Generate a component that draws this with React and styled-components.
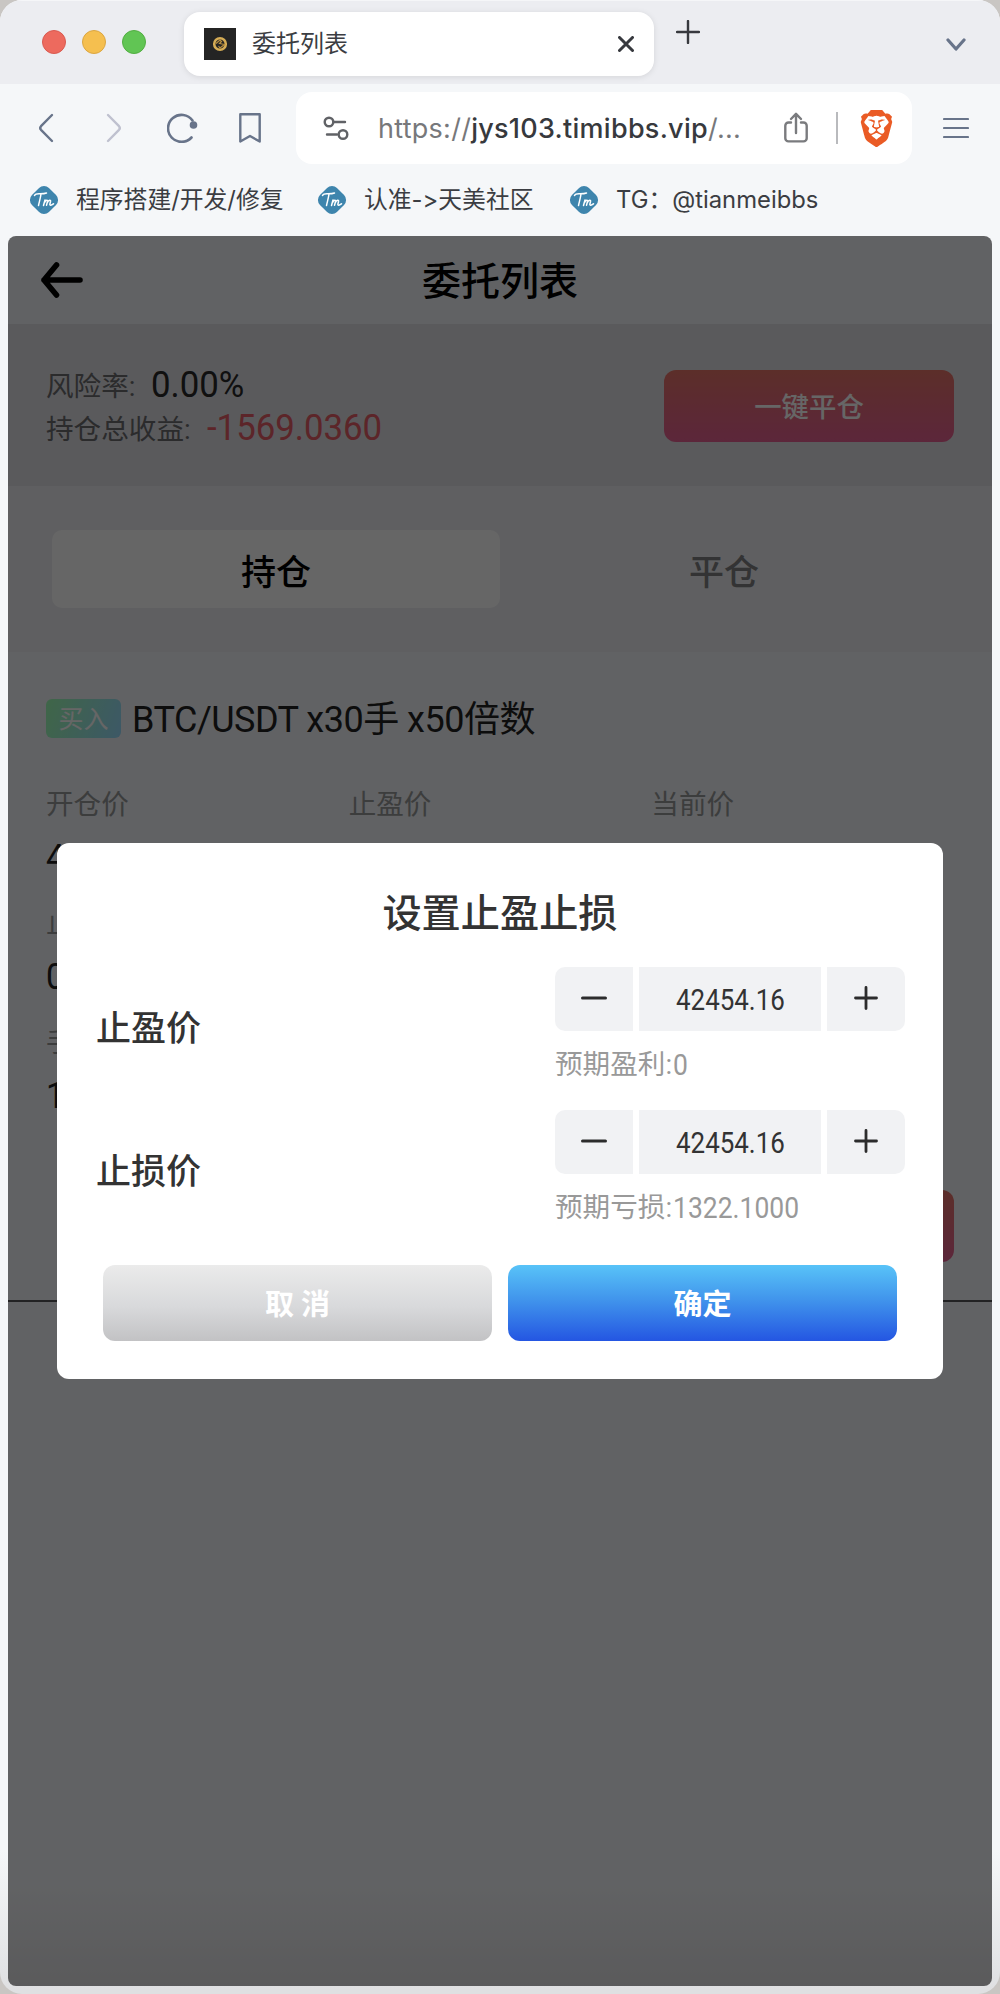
import * as React from "react"
import styled, { createGlobalStyle, css } from "styled-components"
import { SiBrave } from "react-icons/si"

const GlobalStyle = createGlobalStyle`
  * {
    box-sizing: border-box;
  }
  body {
    margin: 0;
    background: #c9c6c3;
  }
  button {
    border: 0;
    padding: 0;
    background: none;
    font: inherit;
    color: inherit;
  }
`

const Window = styled.div`
  width: 1000px;
  height: 1994px;
  border-radius: 22px;
  overflow: hidden;
  display: flex;
  flex-direction: column;
  background: linear-gradient(#f5f7f9 1850px, #dfe0e2 1990px);
  font-family: Inter, "Noto Sans CJK SC", sans-serif;
  font-feature-settings: "calt" 0;
  color: #3b3d42;
`

const TabStrip = styled.div`
  height: 84px;
  flex: none;
  display: flex;
  align-items: flex-start;
  padding: 11px 34px 0 42px;
  background: #ecedf1;
  border-top: 1px solid #f5f6f8;
`

const Lights = styled.div`
  display: flex;
  gap: 16px;
  margin: 18px 38px 0 0;
`

const Light = styled.span`
  width: 24px;
  height: 24px;
  border-radius: 50%;
  background: ${p => p.$color};
  border: 1px solid ${p => p.$edge};
`

const Tab = styled.div`
  width: 470px;
  height: 64px;
  display: flex;
  align-items: center;
  padding: 0 20px;
  border-radius: 16px;
  background: #fff;
  box-shadow: 0 1px 6px rgba(0, 0, 0, 0.1);
  font-size: 24px;
  line-height: 32px;

  & > span {
    flex: 1;
    margin-left: 16px;
  }
`

const NewTab = styled.button`
  margin: 8px auto 0 22px;
  display: flex;
`

const TabMenu = styled.button`
  margin-top: 25px;
  display: flex;
`

const Toolbar = styled.div`
  height: 80px;
  flex: none;
  display: flex;
  align-items: center;
  padding: 8px 31px 0 36px;
`

const NavIcons = styled.div`
  display: grid;
  grid-template-columns: 69px 62px 72px 1fr;
  align-items: center;
  width: 260px;
`

const Address = styled.div`
  width: 616px;
  height: 72px;
  display: flex;
  align-items: center;
  padding: 0 17px 0 27px;
  border-radius: 16px;
  background: #fff;
  margin-right: auto;
`

const Url = styled.div`
  flex: 1;
  margin-left: 29px;
  padding-top: 1px;
  font-size: 27px;
  line-height: 36px;
  letter-spacing: 0.27px;
  color: #77787b;
  white-space: nowrap;

  & > b {
    font-weight: 450;
    color: #37393d;
  }
`

const Separator = styled.span`
  width: 2px;
  height: 32px;
  margin: 0 20px 0 28px;
  background: #b9babd;
`

const Bookmarks = styled.div`
  height: 72px;
  flex: none;
  display: flex;
  align-items: center;
  padding-left: 29px;
  font-size: 23.8px;
  line-height: 32px;
`

const Bookmark = styled.div`
  width: ${p => p.$width}px;
  display: flex;
  align-items: center;
  gap: 17px;
  white-space: nowrap;
`

const Page = styled.div`
  position: relative;
  width: 984px;
  height: 1750px;
  margin: 0 8px;
  border-radius: 8px;
  overflow: hidden;
  background: linear-gradient(#f3f5f9 1650px, #e2e2e5 1750px);
  font-family: Roboto, "Noto Sans CJK SC", sans-serif;
`

const Header = styled.header`
  height: 88px;
  display: grid;
  grid-template-columns: 1fr auto 1fr;
  align-items: center;
  padding: 0 33px;
  color: #000;

  & > h1 {
    margin: 0;
    padding-top: 4px;
    font-size: 39px;
    font-weight: 500;
    line-height: 56px;
  }
`

const Stats = styled.section`
  height: 162px;
  display: flex;
  align-items: center;
  justify-content: space-between;
  padding: 2px 38px 0;
  background: #e1e1e5;
`

const StatLine = styled.div`
  display: flex;
  align-items: center;
  height: 43px;
  font-size: 37px;
`

const StatLabel = styled.span`
  margin-top: -2px;
  font-size: 27.6px;
  color: #6b6b6f;
`

const Num = styled.span`
  display: inline-block;
  transform: scaleX(${p => p.$stretch || 0.9});
  transform-origin: ${p => (p.$center ? "center" : "left")};
  white-space: nowrap;
`

const StatValue = styled(Num)`
  margin-left: 16px;
  color: ${p => p.$color};
`

const DangerButton = styled.button`
  width: 290px;
  height: 72px;
  padding-bottom: 2px;
  border-radius: 12px;
  background: linear-gradient(#e67468, #e66093);
  font-size: 27.4px;
  font-weight: 500;
  color: #fff;
`

const Tabs = styled.nav`
  height: 166px;
  display: flex;
  padding: 44px 44px 0;
  background: #edeef2;
`

const TabItem = styled.button`
  width: 448px;
  height: 78px;
  border-radius: 10px;
  font-size: 35px;
  font-weight: 500;
  color: ${p => (p.$active ? "#000" : "#808083")};
  background: ${p => (p.$active ? "#fff" : "none")};
`

const Order = styled.section`
  height: 650px;
  padding: 42px 38px 0;
  border-bottom: 2px solid #555558;
`

const OrderTitle = styled.div`
  display: flex;
  align-items: center;
  height: 48px;
  gap: 11px;
  font-size: 36px;
  line-height: 44px;
  letter-spacing: -0.5px;
  color: #222;

  & > :last-child {
    padding-top: 4px;
  }
`

const Side = styled.span`
  width: 75px;
  height: 39px;
  border-radius: 6px;
  background: linear-gradient(110deg, #9fffb4, #98dcff);
  font-size: 25px;
  line-height: 41px;
  letter-spacing: 0;
  text-align: center;
  color: #fff;
`

const Grid = styled.div`
  display: grid;
  grid-template-columns: repeat(3, 1fr);
  grid-auto-rows: 119px;
  margin-top: 42px;
`

const Cell = styled.div`
  grid-column: ${p => p.$col};
  font-size: 27.6px;
  line-height: 42px;
  color: #97999a;

  & > ${Num} {
    display: block;
    margin-top: 11px;
    font-size: 37px;
    color: #222;
  }
`

const OrderActions = styled.div`
  display: flex;
  justify-content: flex-end;
  margin-top: 49px;
`

const Overlay = styled.div`
  position: absolute;
  inset: 0;
  display: flex;
  align-items: center;
  justify-content: center;
  background: rgba(0, 0, 0, 0.6);
`

const Dialog = styled.div`
  width: 886px;
  height: 536px;
  padding: 41px 38px 0;
  border-radius: 12px;
  background: #fff;
  color: #333;

  & > h2 {
    margin: 0 0 23px;
    font-size: 39.2px;
    font-weight: 500;
    line-height: 60px;
    text-align: center;
  }
`

const PriceRow = styled.div`
  height: 143px;
  display: flex;
  justify-content: space-between;

  & > label {
    padding: 37px 0 0 1px;
    font-size: 35px;
    line-height: 52px;
    font-weight: 500;
  }
`

const StepperBox = styled.div`
  width: 350px;
`

const Stepper = styled.div`
  display: grid;
  grid-template-columns: 78px 182px 78px;
  gap: 6px;
  height: 64px;

  & > * {
    display: flex;
    align-items: center;
    justify-content: center;
    background: #f1f2f4;
  }
  & > :first-child {
    border-radius: 10px 0 0 10px;
  }
  & > :last-child {
    border-radius: 0 10px 10px 0;
  }
`

const StepValue = styled.div`
  font-size: 28.8px;
  padding-top: 2px;
`

const Hint = styled.div`
  display: flex;
  margin-top: 14px;
  font-size: 27.6px;
  line-height: 40px;
  color: #999;

  & > ${Num} {
    margin-left: 1px;
    font-size: 28.8px;
  }
`

const Buttons = styled.div`
  display: flex;
  justify-content: center;
  gap: 16px;
  margin-top: 12px;
`

const DialogButton = styled.button`
  width: 389px;
  height: 76px;
  padding-bottom: 2px;
  border-radius: 12px;
  font-size: 29px;
  font-weight: 700;
  color: #fff;
  ${p =>
    p.$primary
      ? css`
          background: linear-gradient(#58c3f8, #4195ec 45%, #2456e2);
        `
      : css`
          background: linear-gradient(#ebebeb, #d8d9db 55%, #c2c2c4);
        `}
`

const Favicon = () => (
  <svg width="32" height="32" viewBox="0 0 32 32">
    <rect width="32" height="32" fill="#242424" />
    <circle cx="16" cy="16" r="5.8" fill="none" stroke="#d5ac55" strokeWidth="2.6" />
    <path d="M12 15.5l4-3.500 1.500 1.500-2 2 5 1-4.500 3.500-1.500-2" fill="none" stroke="#b98f3f" strokeWidth="1.2" />
  </svg>
)

const TmIcon = () => (
  <svg width="30" height="30" viewBox="0 0 30 30">
    <rect x="3" y="3" width="24" height="24" rx="7" fill="#3e85ad" transform="rotate(45 15 15)" />
    <path
      d="M5.500 10.500c1-2 3-1.800 5.500-1.700 2.500 0 4.500 0 6.500-.8M12 9c-.5 4-1.500 7-2.500 11.500M14.500 20.500l1.500-5.500M15.500 17.500c1.500-2.500 3.500-3 3-.8l-1 3.500M18.300 17.500c1.500-2.500 3.700-3 3.200-.8-.6 2-1.200 3.800.3 3.500 1 0 1.700-.6 2.700-1.400"
      fill="none"
      stroke="#fff"
      strokeWidth="1.5"
      strokeLinecap="round"
      strokeLinejoin="round"
    />
  </svg>
)

const Line = ({ w, h, d, color = "#68748a", stroke = 2.4, children }) => (
  <svg
    width={w}
    height={h}
    viewBox={`0 0 ${w} ${h}`}
    fill="none"
    stroke={color}
    strokeWidth={stroke}
    strokeLinecap="round"
    strokeLinejoin="round"
  >
    <path d={d} />
    {children}
  </svg>
)

const bookmarks = [
  { text: "程序搭建/开发/修复", width: 288 },
  { text: "认准->天美社区", width: 252 },
  { text: "TG：@tianmeibbs", width: 300 },
]

const cells = [
  { name: "开仓价", col: 1, value: "42" },
  { name: "止盈价", col: 2 },
  { name: "当前价", col: 3 },
  { name: "止损价", col: 1, value: "0" },
  { name: "手续费", col: 1, value: "1" },
]

const rows = [
  { label: "止盈价", hint: "预期盈利:", amount: "0" },
  { label: "止损价", hint: "预期亏损:", amount: "1322.1000" },
]

const Browser = () => (
  <>
    <TabStrip>
      <Lights>
        <Light $color="#ed6a5e" $edge="#d95a50" />
        <Light $color="#f5bf4f" $edge="#dba642" />
        <Light $color="#61c554" $edge="#52ae42" />
      </Lights>
      <Tab>
        <Favicon />
        <span>委托列表</span>
        <Line w={16} h={16} d="M1.500 1.500l13 13M14.500 1.500l-13 13" color="#37393e" stroke={3} />
      </Tab>
      <NewTab>
        <Line w={24} h={24} d="M12 1v22M1 12h22" color="#37393e" stroke={2.4} />
      </NewTab>
      <TabMenu>
        <Line w={20} h={16} d="M2 3l8 9 8-9" stroke={3.2} />
      </TabMenu>
    </TabStrip>
    <Toolbar>
      <NavIcons>
        <Line w={18} h={30} d="M16 2L5 13.200q-1.600 1.800 0 3.600L16 28" />
        <Line w={18} h={30} d="M3 2l11 11.200q1.600 1.800 0 3.600L3 28" color="#bfc1cf" />
        <Line w={32} h={30} d="M24.500 24.500A13.500 13.500 0 1 1 25.500 7.500" stroke={2.6}>
          <circle cx="26.500" cy="12" r="3.800" fill="#68748a" stroke="none" />
        </Line>
        <Line w={22} h={30} d="M1.300 1.300h19.400v27.200L11 23l-9.700 5.500z" />
      </NavIcons>
      <Address>
        <Line w={26} h={26} d="M11 7h11M4 19.500h10" color="#606266" stroke={2.4}>
          <circle cx="6" cy="7" r="4.300" />
          <circle cx="20" cy="19.500" r="4.300" />
        </Line>
        <Url>
          https://<b>jys103.timibbs.vip</b>/...
        </Url>
        <Line
          w={24}
          h={32}
          d="M7 10.500H4.500a3.200 3.200 0 0 0-3.200 3.200v12.500a3.200 3.200 0 0 0 3.200 3.200h15a3.200 3.200 0 0 0 3.200-3.200V13.700a3.200 3.200 0 0 0-3.200-3.200H17M12 21V2M7 7l5-5.200L17 7"
          color="#7a7b7e"
        />
        <Separator />
        <SiBrave size={37} color="#ea5b25" />
      </Address>
      <Line w={26} h={24} d="M1 3h24M1 12h24M1 21h24" stroke={2.2} />
    </Toolbar>
    <Bookmarks>
      {bookmarks.map(b => (
        <Bookmark key={b.text} $width={b.width}>
          <TmIcon />
          {b.text}
        </Bookmark>
      ))}
    </Bookmarks>
  </>
)

const App = () => {
  return (
    <Window>
      <GlobalStyle />
      <Browser />
      <Page>
        <Header>
          <Line w={42} h={36} d="M39 18H3M15.500 3L3 18l12.500 15" color="#000" stroke={5.6} />
          <h1>委托列表</h1>
        </Header>
        <Stats>
          <div>
            <StatLine>
              <StatLabel>风险率:</StatLabel>
              <StatValue $stretch={0.94} $color="#282828">0.00%</StatValue>
            </StatLine>
            <StatLine>
              <StatLabel>持仓总收益:</StatLabel>
              <StatValue $stretch={0.94} $color="#e65c66">-1569.0360</StatValue>
            </StatLine>
          </div>
          <DangerButton>一键平仓</DangerButton>
        </Stats>
        <Tabs>
          <TabItem $active>持仓</TabItem>
          <TabItem>平仓</TabItem>
        </Tabs>
        <Order>
          <OrderTitle>
            <Side>买入</Side>
            <span>BTC/USDT x30手 x50倍数</span>
          </OrderTitle>
          <Grid>
            {cells.map(cell => (
              <Cell key={cell.name} $col={cell.col}>
                {cell.name}
                {cell.value && <Num>{cell.value}</Num>}
              </Cell>
            ))}
          </Grid>
          <OrderActions>
            <DangerButton />
          </OrderActions>
        </Order>
        <Overlay>
          <Dialog>
            <h2>设置止盈止损</h2>
            {rows.map(row => (
              <PriceRow key={row.label}>
                <label>{row.label}</label>
                <StepperBox>
                  <Stepper>
                    <button>
                      <Line w={26} h={26} d="M1.500 12h23" color="#2c2c2c" stroke={3} />
                    </button>
                    <StepValue>
                      <Num $center>42454.16</Num>
                    </StepValue>
                    <button>
                      <Line w={24} h={26} d="M1.500 12h21M12 1.500v21" color="#2c2c2c" stroke={2.8} />
                    </button>
                  </Stepper>
                  <Hint>
                    {row.hint}
                    <Num $stretch={0.92}>{row.amount}</Num>
                  </Hint>
                </StepperBox>
              </PriceRow>
            ))}
            <Buttons>
              <DialogButton>取 消</DialogButton>
              <DialogButton $primary>确定</DialogButton>
            </Buttons>
          </Dialog>
        </Overlay>
      </Page>
    </Window>
  )
}

export default App
